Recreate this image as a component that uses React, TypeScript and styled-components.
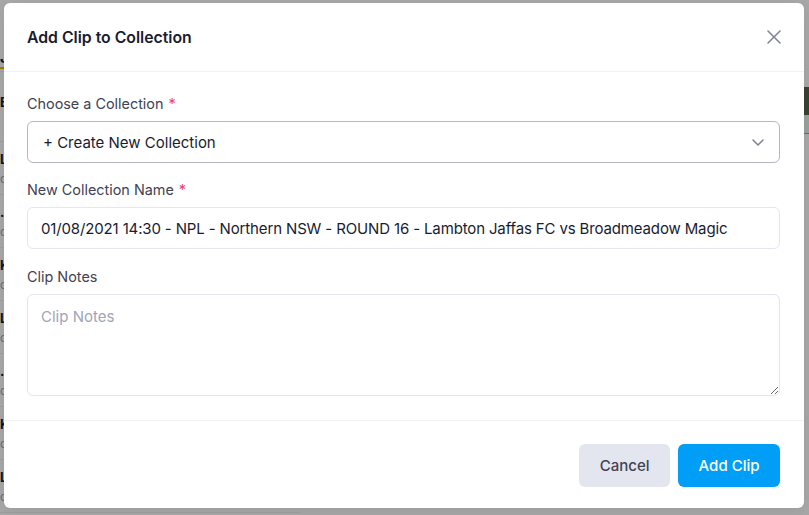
import React from 'react'
import styled, { createGlobalStyle } from 'styled-components'

const GlobalStyle = createGlobalStyle`
  html, body {
    margin: 0;
    padding: 0;
    background: #ffffff;
    overflow: hidden;
  }
  body {
    font-family: Inter, "Noto Sans", sans-serif;
    -webkit-font-smoothing: antialiased;
  }
  * {
    box-sizing: border-box;
  }
`

const Page = styled.div`
  position: relative;
  width: 809px;
  height: 515px;
  overflow: hidden;
  display: flex;
`

const ClipList = styled.div`
  width: 300px;
  padding-top: 48px;
  display: flex;
  flex-direction: column;
`

const ListHeading = styled.div`
  height: 24px;
  font-size: 15px;
  font-weight: 700;
  color: #181c32;
  border-bottom: 1px solid #eff2f5;
  span {
    border-bottom: 2px solid #f1bc00;
  }
`

const Section = styled.div`
  height: 70px;
  padding-top: 22px;
  font-size: 13px;
  font-weight: 700;
  color: #181c32;
  border-bottom: 1px solid #eff2f5;
`

const ListItem = styled.div`
  height: 53px;
  padding-top: 9px;
  border-bottom: 1px solid #eff2f5;
`

const ItemTitle = styled.div`
  font-size: 13px;
  font-weight: 700;
  color: #181c32;
`

const ItemMeta = styled.div`
  margin-top: 4px;
  font-size: 12px;
  color: #a1a5b7;
`

const Main = styled.div`
  flex: 1;
  padding-top: 87px;
`

const Thumb = styled.div`
  height: 28px;
  background: #58664a;
`

const ThumbBar = styled.div`
  height: 19px;
  background: #eaf6ee;
  border-bottom: 1px solid #50cd89;
`

const Backdrop = styled.div`
  position: absolute;
  inset: 0;
  background: rgba(0, 0, 0, 0.34);
  display: flex;
  align-items: flex-start;
  padding: 3px 0 0 4px;
`

const Modal = styled.div`
  width: 800px;
  flex-shrink: 0;
  background: #ffffff;
  border-radius: 6px;
  box-shadow: 0 4px 16px rgba(0, 0, 0, 0.08);
  display: flex;
  flex-direction: column;
`

const Header = styled.div`
  height: 69px;
  padding: 0 23px;
  display: flex;
  align-items: center;
  justify-content: space-between;
  border-bottom: 1px solid #eff2f5;
`

const Title = styled.h3`
  margin: 0;
  font-size: 15.8px;
  font-weight: 600;
  color: #181c32;
`

const CloseButton = styled.button`
  border: 0;
  background: none;
  padding: 0;
  width: 14px;
  height: 14px;
  display: flex;
  cursor: pointer;
`

const Body = styled.div`
  padding: 21px 24px 24px 23px;
  display: flex;
  flex-direction: column;
  gap: 16px;
`

const Field = styled.div`
  display: flex;
  flex-direction: column;
`

const Label = styled.label<{ $required?: boolean }>`
  font-size: 14.4px;
  line-height: 21px;
  color: #3f4254;
  margin-bottom: 7px;
  &::after {
    content: ${(p) => (p.$required ? "'*'" : 'none')};
    color: #f1416c;
    margin-left: 5px;
  }
`

const Select = styled.div`
  height: 42px;
  border: 1px solid #b5b5c3;
  border-radius: 6px;
  padding: 0 15px;
  display: flex;
  align-items: center;
  justify-content: space-between;
  font-size: 15px;
  color: #181c32;
`

const TextInput = styled.input`
  height: 42px;
  margin-bottom: 1px;
  border: 1px solid #e4e6ef;
  border-radius: 6px;
  padding: 0 13px;
  font-family: inherit;
  font-size: 15px;
  letter-spacing: -0.14px;
  color: #181c32;
  outline: none;
`

const TextArea = styled.textarea`
  height: 102px;
  border: 1px solid #e4e6ef;
  border-radius: 6px;
  padding: 11px 13px;
  font-family: inherit;
  font-size: 15px;
  line-height: 21px;
  color: #181c32;
  resize: vertical;
  outline: none;
  &::placeholder {
    color: #a1a5b7;
  }
`

const Footer = styled.div`
  border-top: 1px solid #eff2f5;
  padding: 23px 24px 21px;
  display: flex;
  justify-content: flex-end;
  gap: 8px;
`

const Button = styled.button<{ $primary?: boolean }>`
  height: 43px;
  padding: 0 20.5px;
  border: 0;
  border-radius: 6px;
  font-family: inherit;
  font-size: 15px;
  font-weight: 500;
  background: ${(p) => (p.$primary ? '#009ef7' : '#e4e6ef')};
  color: ${(p) => (p.$primary ? '#ffffff' : '#3f4254')};
  cursor: pointer;
`

const clips = [
  { title: 'Lambton', meta: 'clip' },
  { title: '...', meta: 'clip' },
  { title: 'Kick', meta: 'clip' },
  { title: 'Lambton', meta: 'clip' },
  { title: '...', meta: 'clip' },
  { title: 'Kick', meta: 'clip' },
  { title: 'Lambton', meta: 'clip' },
]

const App = () => {
  return (
    <Page>
      <GlobalStyle />
      <ClipList>
        <ListHeading><span>Jaffas</span></ListHeading>
        <Section>Events</Section>
        {clips.map((c, i) => (
          <ListItem key={i}>
            <ItemTitle>{c.title}</ItemTitle>
            <ItemMeta>{c.meta}</ItemMeta>
          </ListItem>
        ))}
      </ClipList>
      <Main>
        <Thumb />
        <ThumbBar />
      </Main>
      <Backdrop>
        <Modal>
          <Header>
            <Title>Add Clip to Collection</Title>
            <CloseButton aria-label="Close">
              <svg width="14" height="14" viewBox="0 0 14 14">
                <path d="M1 1L13 13M13 1L1 13" stroke="#7e8299" strokeWidth="1.5" strokeLinecap="round" />
              </svg>
            </CloseButton>
          </Header>
          <Body>
            <Field>
              <Label $required>Choose a Collection</Label>
              <Select>
                <span>+ Create New Collection</span>
                <svg width="12" height="7" viewBox="0 0 12 7">
                  <path d="M1 1L6 6L11 1" fill="none" stroke="#7e8299" strokeWidth="1.5" strokeLinecap="round" strokeLinejoin="round" />
                </svg>
              </Select>
            </Field>
            <Field>
              <Label $required>New Collection Name</Label>
              <TextInput defaultValue="01/08/2021 14:30 - NPL - Northern NSW - ROUND 16 - Lambton Jaffas FC vs Broadmeadow Magic" />
            </Field>
            <Field>
              <Label>Clip Notes</Label>
              <TextArea placeholder="Clip Notes" />
            </Field>
          </Body>
          <Footer>
            <Button>Cancel</Button>
            <Button $primary>Add Clip</Button>
          </Footer>
        </Modal>
      </Backdrop>
    </Page>
  )
}

export default App
